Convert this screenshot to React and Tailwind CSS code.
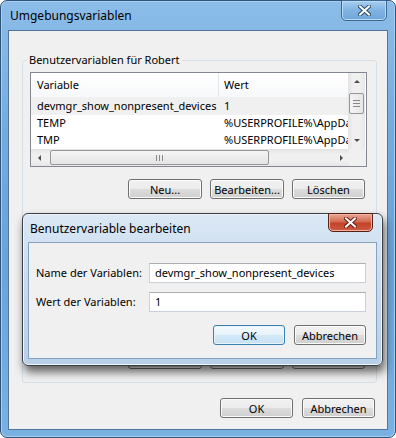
import React from 'react'

const font = { fontFamily: '"Segoe UI", "Noto Sans", "Open Sans", sans-serif' }

function Btn({ children, primary, className = '' }){
  return (
    <div className={`h-[20px] flex items-center justify-center rounded-[3px] border text-[11px] leading-none whitespace-nowrap ${primary ? 'border-[#3c7fb1] bg-[linear-gradient(#f4f9fd_0%,#e6f2fb_50%,#d3e9f8_50%,#c6e1f4_100%)] shadow-[inset_0_0_0_1px_#e9f5fd]' : 'border-[#707070] bg-[linear-gradient(#f2f2f2_0%,#ebebeb_50%,#dddddd_50%,#cfcfcf_100%)] shadow-[inset_0_0_0_1px_#fbfbfb]'} ${className}`}>
      {children}
    </div>
  )
}

function CloseX({ red }){
  return (
    <svg width="13" height="11" viewBox="0 0 13 11" aria-hidden="true">
      <path d="M2 1.5L11 9.5M11 1.5L2 9.5" stroke={red ? '#6b1c10' : '#2c4a6b'} strokeWidth="4" strokeLinecap="square" />
      <path d="M2 1.5L11 9.5M11 1.5L2 9.5" stroke="#fff" strokeWidth="2" strokeLinecap="square" />
    </svg>
  )
}

function Arrow({ dir }){
  const d = {
    up: 'M1 5L4 2L7 5Z',
    down: 'M1 2L4 5L7 2Z',
    left: 'M5 1L2 4L5 7Z',
    right: 'M3 1L6 4L3 7Z',
  }[dir]
  return (
    <svg width="8" height="8" viewBox="0 0 8 8" aria-hidden="true">
      <path d={d} fill="#4d4d4d" />
    </svg>
  )
}

export default function App(){
  const rows = [
    ['devmgr_show_nonpresent_devices', '1', true],
    ['TEMP', '%USERPROFILE%\\AppData\\Local\\Temp'],
    ['TMP', '%USERPROFILE%\\AppData\\Local\\Temp'],
  ]
  return (
    <div className="w-[396px] h-[438px] relative overflow-hidden bg-white text-[11px] text-black" style={font}>
      {/* main window frame */}
      <div className="h-full flex flex-col rounded-[7px] border border-[#2f5479] bg-[linear-gradient(180deg,#8cbde9_0%,#74abdf_30%,#6aa3da_60%,#79b1e3_100%)] shadow-[inset_0_0_0_1px_#a9cff0]">
        <div className="h-[29px] flex items-center pl-[9px] relative">
          <span className="text-[12px] leading-none pt-[1px]">Umgebungsvariablen</span>
          <div className="absolute top-[-1px] right-[8px] w-[46px] h-[21px] rounded-b-[5px] border border-[#3e6791] bg-[linear-gradient(180deg,#a6cdf0,#7fb3e2_50%,#6ea6db)] shadow-[inset_0_0_0_1px_#b9dbf6] flex items-center justify-center">
            <CloseX />
          </div>
        </div>

        {/* client area */}
        <div className="flex-1 mx-[7px] mb-[7px] border border-[#52759c] bg-[#f0f0f0] flex flex-col">
          <fieldset className="mt-[21px] ml-[13px] mr-[10px] border border-[#d5dfe5] rounded-[3px] flex flex-col">
            <legend className="ml-[4px] px-[2px] leading-[16px]">Benutzervariablen für Robert</legend>

            {/* list view */}
            <div className="ml-[7px] mt-[4px] w-[337px] h-[95px] border border-[#828790] bg-white flex flex-col">
              <div className="flex flex-1">
                <div className="w-[317px] flex flex-col overflow-hidden">
                  <div className="h-[25px] flex border-b border-[#eef0f3] bg-[linear-gradient(#ffffff,#f7f8fa)]">
                    <div className="w-[188px] shrink-0 pl-[6px] flex items-center border-r border-[#e3e8ee]">Variable</div>
                    <div className="pl-[5px] flex items-center whitespace-nowrap">Wert</div>
                  </div>
                  {rows.map(([k, v, sel]) => (
                    <div key={k} className={`h-[17px] flex items-center whitespace-nowrap ${sel ? 'bg-[#f0f0f0]' : ''}`}>
                      <div className="w-[188px] shrink-0 pl-[6px]">{k}</div>
                      <div className="pl-[5px]">{v}</div>
                    </div>
                  ))}
                </div>
                {/* vertical scrollbar */}
                <div className="w-[17px] bg-[linear-gradient(90deg,#e3e3e3,#f0f0f0_30%,#f0f0f0_70%,#e6e6e6)] flex flex-col items-center">
                  <div className="h-[17px] flex items-center justify-center"><Arrow dir="up" /></div>
                  <div className="mt-[3px] w-[15px] h-[21px] rounded-[2px] border border-[#979797] bg-[linear-gradient(90deg,#f4f4f4,#e6e6e6)] flex flex-col items-center justify-center gap-[2px]">
                    <div className="w-[7px] h-[1px] bg-[#888]"></div>
                    <div className="w-[7px] h-[1px] bg-[#888]"></div>
                    <div className="w-[7px] h-[1px] bg-[#888]"></div>
                  </div>
                  <div className="flex-1"></div>
                  <div className="h-[17px] flex items-center justify-center"><Arrow dir="down" /></div>
                </div>
              </div>
              {/* horizontal scrollbar */}
              <div className="h-[17px] flex">
                <div className="flex-1 flex items-center bg-[linear-gradient(#e3e3e3,#f0f0f0_30%,#f0f0f0_70%,#e6e6e6)]">
                  <div className="w-[17px] flex items-center justify-center"><Arrow dir="left" /></div>
                  <div className="ml-[2px] w-[219px] h-[15px] rounded-[2px] border border-[#979797] bg-[linear-gradient(#f4f4f4,#e4e4e4)] flex items-center justify-center gap-[2px]">
                    <div className="w-[1px] h-[6px] bg-[#888]"></div>
                    <div className="w-[1px] h-[6px] bg-[#888]"></div>
                    <div className="w-[1px] h-[6px] bg-[#888]"></div>
                  </div>
                  <div className="flex-1"></div>
                  <div className="w-[17px] flex items-center justify-center"><Arrow dir="right" /></div>
                </div>
                <div className="w-[17px] bg-[#f0f0f0]"></div>
              </div>
            </div>

            <div className="mt-[12px] flex justify-end gap-[8px] pr-[11px]">
              <Btn className="w-[74px]">Neu...</Btn>
              <Btn className="w-[74px]">Bearbeiten...</Btn>
              <Btn className="w-[73px]">Löschen</Btn>
            </div>

            <div className="h-[150px]"></div>

            <div className="flex justify-end gap-[8px] pr-[11px] pb-[13px]">
              <Btn className="w-[74px]">Neu...</Btn>
              <Btn className="w-[74px]">Bearbeiten...</Btn>
              <Btn className="w-[73px]">Löschen</Btn>
            </div>
          </fieldset>

          <div className="mt-[15px] flex justify-end gap-[9px] pr-[12px]">
            <Btn className="w-[73px]">OK</Btn>
            <Btn className="w-[73px]">Abbrechen</Btn>
          </div>
        </div>
      </div>

      {/* edit dialog */}
      <div className="absolute left-[22px] top-[213px] w-[361px] h-[153px] rounded-[6px] border border-[#3a3f46] bg-[linear-gradient(180deg,#dbe8f5_0%,#c9dcef_40%,#b7cfe8_100%)] shadow-[2px_6px_10px_rgba(0,0,0,0.6),inset_0_0_0_1px_#eef5fc] flex flex-col">
        <div className="h-[28px] flex items-center pl-[7px] relative">
          <span className="text-[12px] leading-none pt-[1px]">Benutzervariable bearbeiten</span>
          <div className="absolute top-[-1px] right-[9px] w-[45px] h-[19px] rounded-b-[5px] border border-[#5a1f14] bg-[linear-gradient(180deg,#e9a896,#d46a50_45%,#c2432a_55%,#cf5b40)] shadow-[inset_0_0_0_1px_#eeb3a3] flex items-center justify-center">
            <CloseX red />
          </div>
        </div>
        <div className="flex-1 mx-[5px] mb-[6px] border border-[#87a2c0] bg-[#f0f0f0] pt-[20px] pl-[7px] pr-[9px]">
          <div className="flex items-center">
            <div className="w-[113px] shrink-0 whitespace-nowrap">Name der Variablen:</div>
            <div className="w-[217px] h-[20px] border border-[#c9d0d8] border-t-[#abadb3] bg-white flex items-center pl-[5px] whitespace-nowrap">devmgr_show_nonpresent_devices</div>
          </div>
          <div className="mt-[9px] flex items-center">
            <div className="w-[113px] shrink-0 whitespace-nowrap">Wert der Variablen:</div>
            <div className="w-[217px] h-[20px] border border-[#c9d0d8] border-t-[#abadb3] bg-white flex items-center pl-[5px]">1</div>
          </div>
          <div className="mt-[13px] flex justify-end gap-[9px] pr-[1px]">
            <Btn primary className="w-[72px]">OK</Btn>
            <Btn className="w-[72px]">Abbrechen</Btn>
          </div>
        </div>
      </div>
    </div>
  )
}
